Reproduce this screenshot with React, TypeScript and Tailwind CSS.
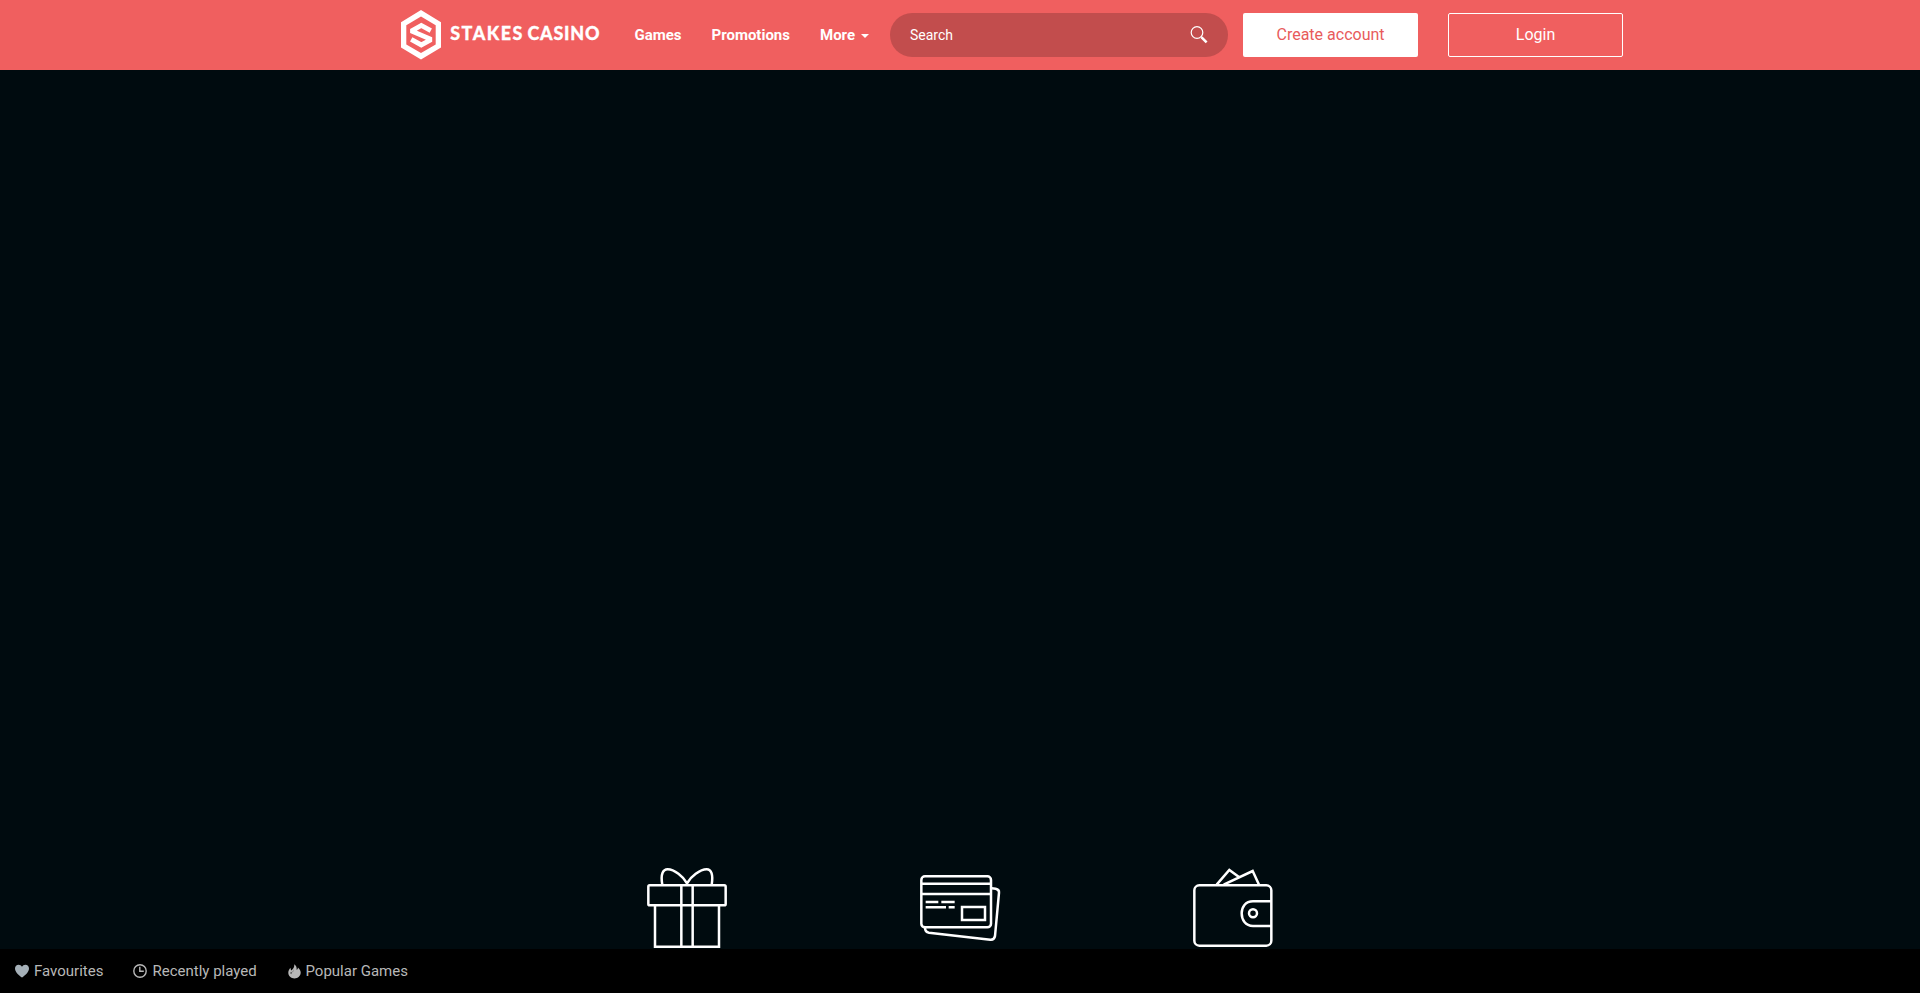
import React from 'react';

const Logo: React.FC = () => (
  <svg width="200" height="50" viewBox="0 0 200 50" className="shrink-0" role="img" aria-label="Stakes Casino">
    <path fill="#fff" fillRule="evenodd" d="M20 0 40 12.3V37.5L20 49.5 0 37.5V12.3ZM20 6.6 5.3 15.3V34.4L20 43.1 34.7 34.4V15.3Z" />
    <path fill="none" stroke="#fff" strokeWidth="4.8" d="M29.8 20.6 20.3 15.5 11.5 20.3V21.5L28.8 28.9V30.3L20.3 34.9 10.2 29.3" />
    <g fill="#fff" stroke="#fff" strokeWidth="0.3" fontFamily="Lato, sans-serif" fontWeight="900" fontSize="19.3" transform="scale(0.93 1)">
      <text x="52.9" y="30.4" textLength="77.6" lengthAdjust="spacing">STAKES</text>
      <text x="136" y="30.4" textLength="77.5" lengthAdjust="spacing">CASINO</text>
    </g>
  </svg>
);

const SearchIcon: React.FC = () => (
  <svg width="18" height="18" viewBox="0 0 18 18" fill="none" stroke="#fff">
    <circle cx="7" cy="6.5" r="5.8" strokeWidth="1.2" />
    <path d="M11 10.5 12 11.5" strokeWidth="1.2" />
    <path d="m11.6 11.4 5 5" strokeWidth="2.5" />
  </svg>
);

const HeartIcon: React.FC = () => (
  <svg width="14" height="14" viewBox="0 0 14 14" fill="#a5b0b8">
    <path d="M7 13.6C4.8 11.8 0 8.4 0 4.4 0 2.1 1.6.7 3.6.7 5.1.7 6.3 1.4 7 2.7 7.7 1.4 8.9.7 10.4.7c2 0 3.6 1.4 3.6 3.7 0 4-4.8 7.4-7 9.2Z" />
  </svg>
);

const ClockIcon: React.FC = () => (
  <svg width="14" height="14" viewBox="0 0 14 14" fill="none" stroke="#b8b8b8" strokeWidth="1.4">
    <circle cx="7" cy="7" r="6.2" />
    <path d="M6.8 2.8v4.5h4" />
  </svg>
);

const FlameIcon: React.FC = () => (
  <svg width="13" height="15" viewBox="0 0 13 15" fill="#b8b8b8">
    <path d="M6.3.2C8.3 1.800 9 3.600 8.600 5.800c.9-.3 1.300-1.100 1.300-2.300 1.800 1.500 2.800 3.200 2.800 5.100 0 3.500-2.800 5.800-6.200 5.800S.3 12.100.3 8.800c0-2.200 1-3.700 2.300-5 0 1 .1 1.900.8 2.600C5 5 6.600 3.200 6.300.2Z" />
    <path fill="#000" d="M5.600 5.200c.1 1.700-1.500 2.500-1.700 3.900-.5-.4-.8-.8-.9-1.400-.6.900-.4 1.700.1 2.500C3.300 8.500 6.100 7.600 5.600 5.200Z" />
  </svg>
);

const GiftIcon: React.FC = () => (
  <svg width="106" height="105" viewBox="-3 0 318 315" fill="none" stroke="#fff" strokeWidth="7.5">
    <rect x="40" y="91" width="232" height="60" rx="4" />
    <path d="M60 151v124h192V151M139 91v184M173 91v184" />
    <path d="M82 90C76 57 84 43 98 43c20 0 47 22 58 42 11-20 39-42 59-42 14 0 20 15 15 47" />
  </svg>
);

const CardsIcon: React.FC = () => (
  <svg width="106" height="105" viewBox="6 0 318 315" fill="none" stroke="#fff" strokeWidth="7.5">
    <rect x="49" y="64" width="209" height="153" rx="11" />
    <path d="M49 86h209M49 117h209" />
    <path d="M62 141h38M109 141h40M62 157h61M131 157h18" />
    <rect x="171" y="156" width="69" height="39" />
    <path d="M260 100 272 101Q283 103 282 113L270 243Q268 255 256 254L72 233Q60 231 60 218" />
  </svg>
);

const WalletIcon: React.FC = () => (
  <svg width="106" height="105" viewBox="0 0 318 315" fill="none" stroke="#fff" strokeWidth="7.5">
    <rect x="43" y="91" width="231" height="181" rx="15" />
    <path d="M274 139H219C196 139 185 156 185 175s11 38 34 38h55" />
    <circle cx="219" cy="175" r="12" />
    <path d="M110 89 148 45 180 68M131 89 218 48 237 89" />
  </svg>
);

const NavigationBar: React.FC = () => (
  <header className="flex h-[70px] w-full shrink-0 justify-center bg-[#f05f5f] text-white">
    <div className="flex w-[1326px] items-center pl-[104px]">
      <a href="#" className="-mt-px">
        <Logo />
      </a>
      <nav className="ml-[33.5px] flex items-center text-[15px] font-bold">
        <a href="#" className="w-[77px]">Games</a>
        <a href="#" className="w-[108.5px]">Promotions</a>
        <a href="#" className="flex w-[70px] items-center">
          More
          <span className="mt-0.5 ml-1.5 border-x-4 border-t-4 border-x-transparent border-t-white" />
        </a>
      </nav>
      <div className="flex h-11 w-[338px] items-center justify-between rounded-full bg-[#c24d4d] pr-5 pl-5 text-sm">
        <span>Search</span>
        <SearchIcon />
      </div>
      <button className="ml-[15px] h-11 w-[175px] rounded-xs bg-white text-base text-[#e85b5b]">Create account</button>
      <button className="ml-[30px] h-11 w-[175px] rounded-xs border border-white text-base">Login</button>
    </div>
  </header>
);

const BottomBar: React.FC = () => (
  <footer className="flex h-11 shrink-0 items-center bg-black pl-[15px] text-[15px] text-[#b8b8b8]">
    <a href="#" className="flex w-[118px] items-center gap-[5px]">
      <HeartIcon />
      Favourites
    </a>
    <a href="#" className="flex w-[154.5px] items-center gap-[5.5px]">
      <ClockIcon />
      Recently played
    </a>
    <a href="#" className="flex items-center gap-[5px]">
      <FlameIcon />
      Popular Games
    </a>
  </footer>
);

const App: React.FC = () => {
  return (
    <div className="flex h-screen flex-col overflow-hidden bg-[#000b0f] font-[Roboto,sans-serif]">
      <NavigationBar />
      <main className="flex flex-1 items-end justify-center overflow-hidden">
        <div className="-mb-[11px] flex w-[819px] justify-around">
          <GiftIcon />
          <CardsIcon />
          <WalletIcon />
        </div>
      </main>
      <BottomBar />
    </div>
  );
};

export default App;
